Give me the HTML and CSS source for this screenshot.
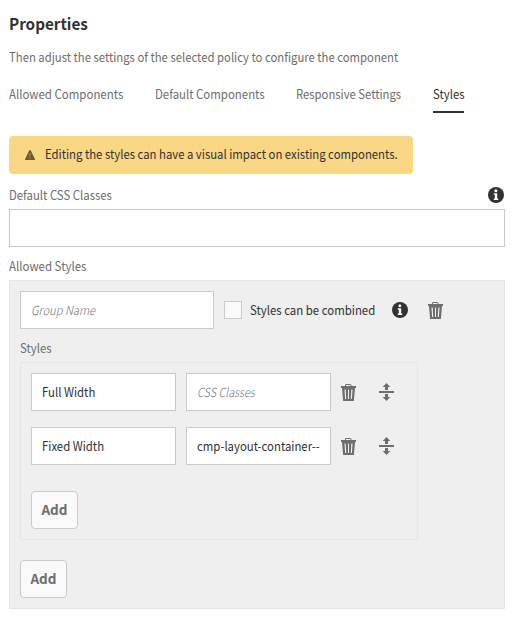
FILE: index.html
```html
<!DOCTYPE html>
<html lang="en">
<head>
<meta charset="utf-8">
<title>Properties</title>
<link rel="stylesheet" href="styles.css">
</head>
<body>
<svg class="sprite" width="0" height="0" aria-hidden="true">
  <symbol id="info" viewBox="0 0 16 16">
    <circle cx="8" cy="8" r="8" fill="#323232"/>
    <circle cx="7.900" cy="3.800" r="1.500" fill="#fff"/>
    <path d="M5.800 6.200h3.400v5.300h1V13H5.800v-1.500h1V7.700h-1z" fill="#fff"/>
  </symbol>
  <symbol id="trash" viewBox="0 0 15 17">
    <path d="M4.500 2.500V1q0-.5.5-.5h4.500q.5 0 .5.5v1.500" fill="none" stroke="#6e6e6e"/>
    <path d="M0 2h15v2H0z" fill="#6e6e6e"/>
    <path fill-rule="evenodd" d="M1 4h13l-1.100 13H2.100zM3.500 5.500l.6 9.500h1.100l-.5-9.500zM7 5.500V15h1V5.500zM10.300 5.500L9.800 15h1.100l.6-9.500z" fill="#6e6e6e"/>
  </symbol>
  <symbol id="move" viewBox="0 0 15 18">
    <path d="M0 8h15v2H0zM7.500 0L11.300 4H9v3H6V4H3.700zM6 11h3v3h2.300l-3.800 4-3.800-4H6z" fill="#6e6e6e"/>
  </symbol>
</svg>
<main class="properties">
  <h1 class="title"><span class="text">Properties</span></h1>
  <p class="description"><span class="text">Then adjust the settings of the selected policy to configure the component</span></p>
  <nav class="tabs">
    <a class="tab tab-allowed"><span class="text">Allowed Components</span></a>
    <a class="tab tab-default"><span class="text">Default Components</span></a>
    <a class="tab tab-responsive"><span class="text">Responsive Settings</span></a>
    <a class="tab tab-styles selected"><span class="text">Styles</span></a>
  </nav>
  <div class="alert">
    <svg class="alert-icon" width="10" height="10" viewBox="0 0 10 10"><path d="M5 0q.6 0 .8.600L9.900 9q.3 1-.6 1H.7Q-.2 10 .1 9L4.200.6Q4.400 0 5 0z" fill="#6b5a31"/><path d="M4.500 3h1v3.500h-1zM4.500 7.500h1v1.200h-1z" fill="#b89a58"/></svg>
    <span class="text">Editing the styles can have a visual impact on existing components.</span>
  </div>
  <div class="label-row"><label class="label"><span class="text">Default CSS Classes</span></label><svg width="16" height="16"><use href="#info"/></svg></div>
  <div class="field"></div>
  <div class="label label-allowed"><span class="text">Allowed Styles</span></div>
  <section class="panel">
    <div class="group-row">
      <div class="field group-name placeholder"><span class="text">Group Name</span></div>
      <span class="checkbox"></span>
      <span class="check-label"><span class="text">Styles can be combined</span></span>
      <svg class="group-info" width="16" height="16"><use href="#info"/></svg>
      <svg width="15" height="17"><use href="#trash"/></svg>
    </div>
    <div class="label label-styles"><span class="text">Styles</span></div>
    <div class="styles-box">
      <div class="style-row">
        <div class="field"><span class="text">Full Width</span></div>
        <div class="field placeholder css"><span class="text">CSS Classes</span></div>
        <svg width="15" height="17"><use href="#trash"/></svg>
        <svg class="move" width="15" height="18"><use href="#move"/></svg>
      </div>
      <div class="style-row">
        <div class="field"><span class="text">Fixed Width</span></div>
        <div class="field"><span class="text">cmp-layout-container--</span></div>
        <svg width="15" height="17"><use href="#trash"/></svg>
        <svg class="move" width="15" height="18"><use href="#move"/></svg>
      </div>
      <button class="add" type="button">Add</button>
    </div>
    <button class="add" type="button">Add</button>
  </section>
</main>
</body>
</html>
```
FILE: styles.css
```css
* { box-sizing: border-box; }
body { margin: 0; background: #fff; color: #323232; font: 12.5px/18px "Noto Sans CJK SC", "Noto Sans", sans-serif; }
svg { display: block; flex: none; }
.sprite { position: absolute; }
.text { display: inline-block; vertical-align: top; transform: scaleX(.909); transform-origin: 0 50%; white-space: nowrap; }
.properties { width: 505px; padding: 11px 0 0 9px; }
.title { margin: 0; font-size: 16px; line-height: 24px; font-weight: 700; }
.title .text { transform: scaleX(.952); }
.description { margin: 13px 0 0; color: #6e6e6e; height: 18px; white-space: nowrap; }
.description .text { transform: scaleX(.905); }
.tabs { display: flex; margin-top: 19px; gap: 32px; height: 28px; color: #6e6e6e; white-space: nowrap; }
.tab-allowed { width: 114px; }
.tab-allowed .text { transform: scaleX(.916); }
.tab-default { width: 109px; }
.tab-default .text { transform: scaleX(.913); }
.tab-responsive { width: 105px; }
.tab-responsive .text { transform: scaleX(.903); }
.tab-styles { width: 31px; }
.selected { color: #323232; border-bottom: 2px solid #323232; }
.alert { display: flex; align-items: center; width: 404px; height: 38px; margin-top: 23px; padding: 0 0 2px 16px; gap: 10px; border-radius: 4px; background: #fad784; white-space: nowrap; }
.alert .text { transform: scaleX(.907); }
.alert-icon { margin-top: 1px; }
.label-row { display: flex; justify-content: space-between; align-items: center; height: 18px; margin: 12px 1px 5px 0; }
.label { color: #6e6e6e; height: 18px; white-space: nowrap; }
.field { height: 38px; padding: 0 10px; border: 1px solid #cacaca; background: #fff; line-height: 36px; white-space: nowrap; }
.label-allowed { margin: 10px 0 5px; }
.label-allowed .text { transform: scaleX(.918); }
.panel { height: 329px; padding: 10px; border: 1px solid #e6e6e6; background: #efefef; }
.group-row { display: flex; align-items: center; }
.group-name { width: 194px; }
.placeholder { color: #747474; font-style: italic; font-weight: 300; }
.placeholder .text { transform: scaleX(.895); }
.css .text { transform: scaleX(.87); }
.checkbox { width: 18px; height: 18px; margin: 0 8px 0 10px; border: 1px solid #cacaca; background: #fafafa; }
.check-label { width: 126px; white-space: nowrap; }
.check-label .text { transform: scaleX(.912); }
.group-info { margin: 0 20px 0 16px; }
.label-styles { margin: 10px 0 5px; }
.styles-box { width: 398px; height: 178px; padding: 10px; margin-bottom: 20px; border: 1px solid #e6e6e6; }
.style-row { display: flex; align-items: center; gap: 10px; margin-bottom: 16px; }
.style-row .field { width: 145px; }
.style-row + .style-row { margin-bottom: 26px; }
.move { margin-left: 13px; }
.add { display: block; width: 47px; height: 38px; padding: 0 0 2px; border: 1px solid #cacaca; border-radius: 4px; background: #fafafa; color: #6e6e6e; font: 700 13.500px/34px "Noto Sans CJK SC", "Noto Sans", sans-serif; }
```
